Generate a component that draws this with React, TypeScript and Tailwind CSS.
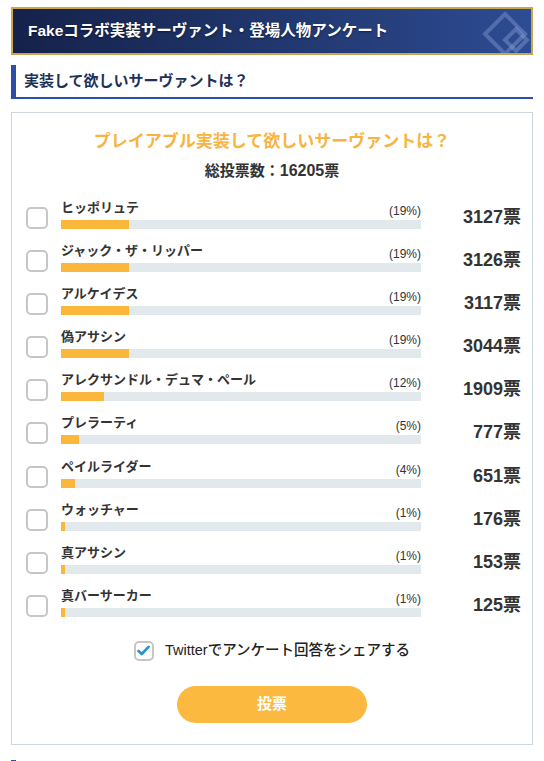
import React from "react";

const rows = [
  { name: "ヒッポリュテ", pct: 19, votes: 3127 },
  { name: "ジャック・ザ・リッパー", pct: 19, votes: 3126 },
  { name: "アルケイデス", pct: 19, votes: 3117 },
  { name: "偽アサシン", pct: 19, votes: 3044 },
  { name: "アレクサンドル・デュマ・ペール", pct: 12, votes: 1909 },
  { name: "プレラーティ", pct: 5, votes: 777 },
  { name: "ペイルライダー", pct: 4, votes: 651 },
  { name: "ウォッチャー", pct: 1, votes: 176 },
  { name: "真アサシン", pct: 1, votes: 153 },
  { name: "真バーサーカー", pct: 1, votes: 125 },
];

const font = {
  fontFamily: '"Liberation Sans", "Noto Sans CJK JP", sans-serif',
};

export default function App() {
  return (
    <div className="w-[544px] h-[761px] overflow-hidden bg-white px-[11px]" style={font}>
      {/* Header */}
      <div className="relative mt-[7px] h-[48px] overflow-hidden border-2 border-[#c9a650] bg-gradient-to-r from-[#15224a] to-[#2d4c93] flex items-center">
        <span className="pl-[15px] text-[15.5px] font-bold text-white [text-shadow:0_1px_2px_rgba(0,0,0,0.5)]">
          Fakeコラボ実装サーヴァント・登場人物アンケート
        </span>
        <svg className="absolute right-0 top-0" width="56" height="44" viewBox="0 0 56 44">
          <g fill="none" stroke="#8fa6d6" strokeOpacity="0.4" strokeWidth="4">
            <path d="M30 5 L50 25 L30 45 L10 25 Z" />
            <path d="M41 20 L52 31 L41 42 L30 31 Z" />
          </g>
        </svg>
      </div>

      {/* Section heading */}
      <div className="mt-[10px] h-[34px] border-l-[5px] border-b-2 border-[#2c4fa6] flex items-center">
        <span className="pl-[8px] text-[15px] font-bold text-[#1e3157]">実装して欲しいサーヴァントは？</span>
      </div>

      {/* Card */}
      <div className="mt-[13px] border border-[#c9d7e1] pt-[17px] pb-[21px]">
        <div className="text-center text-[17px] leading-[24px] font-bold text-[#f8b43f]">
          プレイアブル実装して欲しいサーヴァントは？
        </div>
        <div className="mt-[7px] text-center text-[15px] leading-[20px] font-bold text-[#333]">
          総投票数：<span className="text-[16px]">16205</span>票
        </div>

        <div className="mt-[19px] pl-[14px] pr-[11px]">
          {rows.map((r) => (
            <div key={r.name} className="flex h-[43.1px]">
              <div className="mt-[7px] w-[22px] h-[22px] rounded-[5px] border-2 border-[#c6c6c6] bg-white shrink-0" />
              <div className="ml-[13px] flex-1 flex flex-col">
                <div className="flex items-end justify-between h-[16px]">
                  <span className="text-[13px] leading-[16px] font-semibold text-[#333]">{r.name}</span>
                  <span className="text-[12px] leading-[14px] text-[#333] translate-y-[2px]">({r.pct}%)</span>
                </div>
                <div className="mt-[4px] h-[9px] bg-[#e2e9ed]">
                  <div className="h-full bg-[#fbb73c]" style={{ width: `${r.pct}%` }} />
                </div>
              </div>
              <div className="w-[100px] mt-[7px] text-right text-[18px] leading-[20px] font-bold text-[#333]">
                {r.votes}
                <span className="font-semibold">票</span>
              </div>
            </div>
          ))}
        </div>

        <div className="mt-[10px] flex items-center justify-center gap-[11px] h-[20px]">
          <div className="w-[20px] h-[20px] rounded-[5px] border-2 border-[#c6c6c6] bg-white flex items-center justify-center">
            <svg width="13" height="11" viewBox="0 0 13 11">
              <path d="M1.5 6 L4.8 9 L11.5 1.8" fill="none" stroke="#2b8ed6" strokeWidth="2.6" strokeLinecap="round" strokeLinejoin="round" />
            </svg>
          </div>
          <span className="text-[14.5px] font-medium text-[#222]">Twitterでアンケート回答をシェアする</span>
        </div>

        <div className="mt-[25px] flex justify-center">
          <button className="w-[190px] h-[37px] rounded-full bg-[#fbb93f] text-white text-[15px] font-bold">
            投票
          </button>
        </div>
      </div>

      <div className="mt-[15px] w-[5px] h-[3px] bg-[#2c4fa6]" />
    </div>
  );
}
